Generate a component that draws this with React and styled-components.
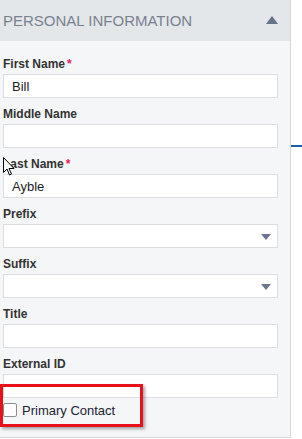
import React from 'react'
import styled, { createGlobalStyle } from 'styled-components'

const Global = createGlobalStyle`
	body {
		margin: 0;
		background: #fff;
		font-family: "Liberation Sans", Arial, sans-serif;
	}
`
const Page = styled.div`
	position: relative;
	display: flex;
	width: 302px;
	height: 439px;
	overflow: hidden;
`
const Panel = styled.div`
	width: 291px;
	height: 438px;
	box-sizing: border-box;
	background: #f5f6f8;
	border-right: 1px solid #d5d8dc;
	border-bottom: 1px solid #d5d8dc;
	display: flex;
	flex-direction: column;
`
const Header = styled.div`
	height: 41px;
	background: #e4e7ea;
	display: flex;
	align-items: center;
	justify-content: space-between;
	padding: 0 12px 0 3px;
	flex-shrink: 0;
`
const HeaderTitle = styled.span`
	font-size: 15px;
	color: #78828f;
	letter-spacing: 0;
`
const Caret = styled.span`
	width: 0;
	height: 0;
	border-left: 6px solid transparent;
	border-right: 6px solid transparent;
	border-bottom: 8px solid #66718a;
	margin-bottom: 1px;
`
const Body = styled.div`
	display: flex;
	flex-direction: column;
	gap: 8px;
	padding: 15px 12px 0 3px;
`
const Field = styled.div`
	display: flex;
	flex-direction: column;
	gap: 2px;
`
const Label = styled.label`
	font-size: 12px;
	font-weight: bold;
	line-height: 16px;
	color: #333;
`
const Req = styled.span`
	color: #e0245e;
	margin-left: 2px;
`
const Input = styled.div`
	height: 24px;
	box-sizing: border-box;
	background: #fff;
	border: 1px solid #dcdee2;
	display: flex;
	align-items: center;
	justify-content: space-between;
	padding: 0 6px 0 8px;
	font-size: 13px;
	color: #222;
`
const SelectCaret = styled.span`
	width: 0;
	height: 0;
	border-left: 5px solid transparent;
	border-right: 5px solid transparent;
	border-top: 6px solid #6b7590;
	margin-top: 2px;
`
const CheckRow = styled.div`
	display: flex;
	align-items: center;
	gap: 5px;
	margin-top: -4px;
	height: 16px;
`
const Box = styled.span`
	width: 14px;
	height: 14px;
	box-sizing: border-box;
	border: 1px solid #8a8f96;
	border-radius: 2px;
	background: #fff;
`
const CheckText = styled.span`
	font-size: 13px;
	color: #1c2233;
`
const Side = styled.div`
	flex: 1;
	display: flex;
	flex-direction: column;
	padding-top: 145px;
`
const BlueLine = styled.div`
	height: 2px;
	background: #1b5ea6;
`
const Highlight = styled.div`
	position: absolute;
	left: 0;
	top: 384px;
	width: 143px;
	height: 43px;
	box-sizing: border-box;
	border: 3px solid #e8101a;
	box-shadow: 2px 2px 3px rgba(0, 0, 0, 0.35);
`
const Cursor = styled.svg`
	position: absolute;
	left: 3px;
	top: 157px;
`

const fields = [
	{ label: 'First Name', required: true, value: 'Bill' },
	{ label: 'Middle Name' },
	{ label: 'Last Name', required: true, value: 'Ayble' },
	{ label: 'Prefix', select: true },
	{ label: 'Suffix', select: true },
	{ label: 'Title' },
	{ label: 'External ID' },
]

const App = () => (
	<Page>
		<Global />
		<Panel>
			<Header>
				<HeaderTitle>PERSONAL INFORMATION</HeaderTitle>
				<Caret />
			</Header>
			<Body>
				{fields.map((f) => (
					<Field key={f.label}>
						<Label>
							{f.label}
							{f.required ? <Req>*</Req> : null}
						</Label>
						<Input>
							<span>{f.value}</span>
							{f.select ? <SelectCaret /> : null}
						</Input>
					</Field>
				))}
				<CheckRow>
					<Box />
					<CheckText>Primary Contact</CheckText>
				</CheckRow>
			</Body>
		</Panel>
		<Side>
			<BlueLine />
		</Side>
		<Highlight />
		<Cursor width="12" height="19" viewBox="0 0 12 19">
			<path d="M0.5 0.5 L0.5 15.5 L4 12 L6.5 18 L8.5 17 L6 11.5 L11 11.5 Z" fill="#fff" stroke="#000" strokeWidth="1" />
		</Cursor>
	</Page>
)

export default App
